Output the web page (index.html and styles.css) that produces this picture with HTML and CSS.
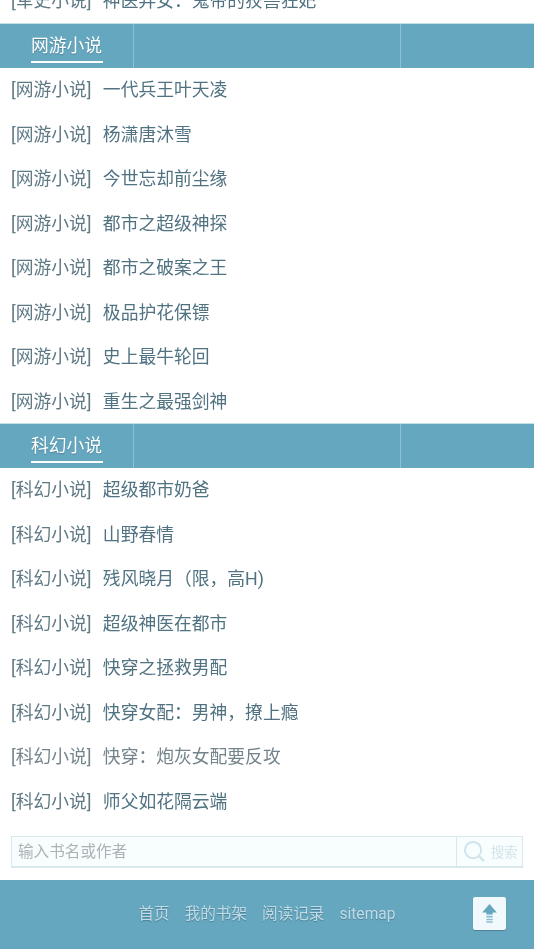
FILE: index.html
```html
<!DOCTYPE html>
<html lang="zh">
<head>
<meta charset="utf-8">
<title>小说</title>
<link rel="stylesheet" href="styles.css">
</head>
<body>
<main class="page">
  <ul class="list list-top">
    <li><a class="cat">[军史小说]</a><a class="name">神医弃女：鬼帝的狡兽狂妃</a></li>
  </ul>
  <header class="bar"><h2 class="tab"><span>网游小说</span></h2><div class="bar-mid"></div></header>
  <ul class="list">
    <li><a class="cat">[网游小说]</a><a class="name">一代兵王叶天凌</a></li>
    <li><a class="cat">[网游小说]</a><a class="name">杨潇唐沐雪</a></li>
    <li><a class="cat">[网游小说]</a><a class="name">今世忘却前尘缘</a></li>
    <li><a class="cat">[网游小说]</a><a class="name">都市之超级神探</a></li>
    <li><a class="cat">[网游小说]</a><a class="name">都市之破案之王</a></li>
    <li><a class="cat">[网游小说]</a><a class="name">极品护花保镖</a></li>
    <li><a class="cat">[网游小说]</a><a class="name">史上最牛轮回</a></li>
    <li><a class="cat">[网游小说]</a><a class="name">重生之最强剑神</a></li>
  </ul>
  <header class="bar"><h2 class="tab"><span>科幻小说</span></h2><div class="bar-mid"></div></header>
  <ul class="list">
    <li><a class="cat">[科幻小说]</a><a class="name">超级都市奶爸</a></li>
    <li><a class="cat">[科幻小说]</a><a class="name">山野春情</a></li>
    <li><a class="cat">[科幻小说]</a><a class="name">残风晓月（限，高H)</a></li>
    <li><a class="cat">[科幻小说]</a><a class="name">超级神医在都市</a></li>
    <li><a class="cat">[科幻小说]</a><a class="name">快穿之拯救男配</a></li>
    <li><a class="cat">[科幻小说]</a><a class="name">快穿女配：男神，撩上瘾</a></li>
    <li class="dim"><a class="cat">[科幻小说]</a><a class="name">快穿：炮灰女配要反攻</a></li>
    <li><a class="cat">[科幻小说]</a><a class="name">师父如花隔云端</a></li>
  </ul>
  <form class="search">
    <input class="search-input" type="text" placeholder="输入书名或作者">
    <div class="search-btn">
      <svg class="search-icon" viewBox="0 0 24 24" width="23" height="23" aria-hidden="true">
        <circle cx="10.5" cy="10.5" r="8.5" fill="none" stroke="#cfe3ea" stroke-width="2"/>
        <path d="M16.8 17l5 5" fill="none" stroke="#cfe3ea" stroke-width="2.4"/>
      </svg>
      <span>搜索</span>
    </div>
  </form>
  <footer class="foot">
    <nav class="foot-nav"><a>首页</a><a>我的书架</a><a>阅读记录</a><a>sitemap</a></nav>
    <a class="top" aria-label="top">
      <svg viewBox="0 0 16 20" width="17" height="21" aria-hidden="true">
        <path d="M8 1L15 9H11V11H5V9H1Z" fill="#65a7bf"/>
        <path d="M5 12.2h6v1.6H5zM5 15h6v1.4H5zM5 17.4h6v1.4H5z" fill="#8dbdcf"/>
      </svg>
    </a>
  </footer>
</main>
</body>
</html>
```

FILE: styles.css
```css
* { box-sizing: border-box; }
html, body { margin: 0; padding: 0; }
body {
  height: 949px;
  overflow: hidden;
  background: #fff;
  font-family: Roboto, "Noto Sans CJK SC", sans-serif;
  font-size: 17.8px;
  font-weight: 400;
  color: #4f6f7d;
}
.page { margin-top: -21px; will-change: transform; }
.list { list-style: none; margin: 0; padding: 0; }
.list-top { padding-bottom: 0.5px; }
.list li {
  height: 44.5px;
  line-height: 43.5px;
  padding-left: 11px;
  white-space: nowrap;
  display: flex;
}
.cat { color: #5f7985; margin-right: 11.3px; }
.name { color: #507281; }
.dim .name, .dim .cat { color: #74848b; }
.bar {
  height: 44px;
  background: #65a7bf;
  display: flex;
  box-shadow: 0 -1px 0 #c4dfe7;
}
.tab {
  width: 134px;
  margin: 0;
  padding-left: 31px;
  border-right: 1px solid #8dc0d2;
  font-size: 17.8px;
  font-weight: 400;
  color: #fff;
  text-shadow: 0 1px 1px #4d8197;
}
.tab span {
  display: block;
  width: 71.5px;
  height: 39.4px;
  line-height: 44px;
  border-bottom: 2px solid #fff;
}
.bar-mid { width: 267px; border-right: 1px solid #8dc0d2; }
.search {
  display: flex;
  height: 32px;
  margin: 12px 11px 12px 11px;
  background: #f8fdfe;
  border: 1px solid #d9e8ec;
  border-bottom-width: 2px;
}
.search-input {
  flex: 1;
  min-width: 0;
  border: 0;
  padding: 0 6px;
  background: transparent;
  font: inherit;
  font-size: 15.6px;
  outline: none;
}
.search-input::placeholder { color: #a9b3b6; opacity: 1; }
.search-btn {
  width: 66px;
  display: flex;
  align-items: center;
  gap: 5px;
  padding-left: 6px;
  border-left: 1px solid #d9e8ec;
  font-size: 13.2px;
  color: #d2e3e9;
}
.foot {
  height: 69px;
  background: #65a7bf;
  position: relative;
  display: flex;
  justify-content: center;
  align-items: center;
}
.foot-nav {
  display: flex;
  align-items: baseline;
  gap: 15px;
  font-size: 15.6px;
  color: #c0dbe5;
  text-shadow: 0 1px 1px #4d8197;
  margin-bottom: 6px;
}
.top {
  position: absolute;
  left: 473px;
  top: 17px;
  width: 33px;
  height: 33px;
  display: flex;
  align-items: center;
  justify-content: center;
  background: #f1f9fc;
  border-radius: 2px;
  box-shadow: 0 1px 1px #4d8197;
}
```
